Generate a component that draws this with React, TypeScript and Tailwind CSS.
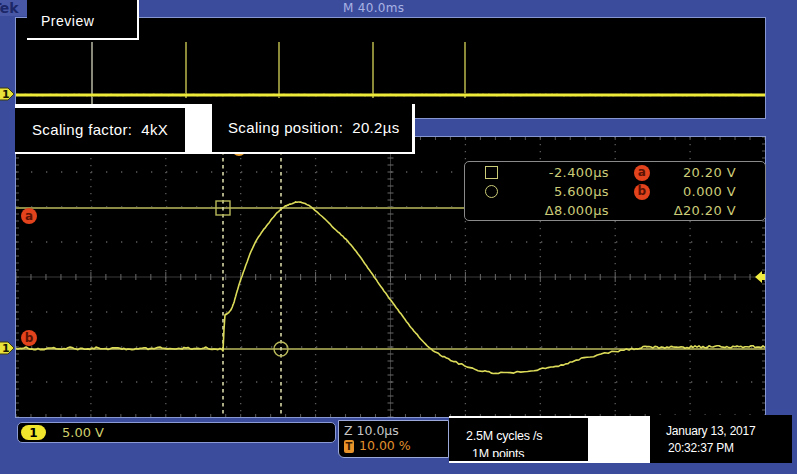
import React from "react";

function frac(x: number) {
  return x - Math.floor(x);
}
function rnd(i: number) {
  return frac(Math.sin(i * 12.9898 + 78.233) * 43758.5453) - 0.5;
}

function spline(pts: [number, number][], steps = 10) {
  const out: [number, number][] = [];
  for (let i = 0; i < pts.length - 1; i++) {
    const p0 = pts[Math.max(0, i - 1)];
    const p1 = pts[i];
    const p2 = pts[i + 1];
    const p3 = pts[Math.min(pts.length - 1, i + 2)];
    for (let s = 0; s < steps; s++) {
      const t = s / steps;
      const t2 = t * t;
      const t3 = t2 * t;
      const f = (k: 0 | 1) =>
        0.5 *
        (2 * p1[k] +
          (-p0[k] + p2[k]) * t +
          (2 * p0[k] - 5 * p1[k] + 4 * p2[k] - p3[k]) * t2 +
          (-p0[k] + 3 * p1[k] - 3 * p2[k] + p3[k]) * t3);
      out.push([f(0), f(1)]);
    }
  }
  out.push(pts[pts.length - 1]);
  return out;
}

function wavePath() {
  const pts: [number, number][] = [];
  for (let x = 0; x <= 206; x += 2) {
    const bump = Math.max(0, Math.sin(x * 0.21) * Math.sin(x * 0.07)) * 2.2;
    pts.push([x, 212 + rnd(x) * 1.6 - bump]);
  }
  pts.push([207, 214]);
  pts.push([208, 192]);
  const key: [number, number][] = [
    [209, 178],
    [213, 175],
    [217, 168],
    [225, 142],
    [238, 108],
    [252, 87],
    [265, 72],
    [275, 67],
    [283, 65],
    [295, 70],
    [318, 91],
    [335, 108],
    [352, 131],
    [368, 154],
    [385, 177],
    [398, 194],
    [415, 212],
    [435, 223],
    [462, 233],
    [485, 236],
    [518, 233],
    [545, 228],
    [568, 221],
    [602, 214],
    [625, 211],
  ];
  const sp = spline(key, 10);
  sp.forEach((p, i) => {
    const amp = p[0] > 420 ? 1.8 : 0.7;
    pts.push([p[0], p[1] + rnd(i + 500) * amp]);
  });
  for (let x = 627; x <= 751; x += 2) {
    pts.push([x, 210 + rnd(x + 1000) * 2.6]);
  }
  return pts.map((p, i) => (i === 0 ? "M" : "L") + p[0].toFixed(1) + " " + p[1].toFixed(1)).join(" ");
}

const WAVE = wavePath();

function ChannelMarker() {
  return (
    <svg width="16" height="14" viewBox="0 0 16 14">
      <path d="M-2 1 H8 L14 7 L8 13 H-2 Z" fill="#e8e23a" stroke="#3a3a10" strokeWidth="1" />
      <text x="2" y="11" fontSize="11" fontFamily="DejaVu Sans, sans-serif" fontWeight="bold" fill="#1a1a00">
        1
      </text>
    </svg>
  );
}

function Badge({ l }: { l: string }) {
  return (
    <div className="w-[16px] h-[16px] rounded-full bg-[#e2431c] flex items-center justify-center text-[12px] leading-none font-bold text-[#5a1204] pb-[1px]">
      {l}
    </div>
  );
}

function MainGraticule() {
  const W = 749;
  const H = 280;
  const vx = Array.from({ length: 9 }, (_, i) => (i + 1) * (W / 10));
  const hy = Array.from({ length: 7 }, (_, i) => (i + 1) * (H / 8));
  const ticksX = Array.from({ length: 51 }, (_, i) => i * (W / 50));
  const ticksY = Array.from({ length: 41 }, (_, i) => i * (H / 40));
  return (
    <svg width={W} height={H} viewBox={`0 0 ${W} ${H}`} className="block">
      {vx.map((x, i) =>
        i === 4 ? null : (
          <line key={"v" + i} x1={x} y1={0} x2={x} y2={H} stroke="#5c5c5c" strokeWidth="1.3" strokeDasharray="1.3 5.7" />
        )
      )}
      {hy.map((y, i) =>
        i === 3 ? null : (
          <line key={"h" + i} x1={0} y1={y} x2={W} y2={y} stroke="#5c5c5c" strokeWidth="1.3" strokeDasharray="1.3 13.7" />
        )
      )}
      <line x1={0} y1={H / 2} x2={W} y2={H / 2} stroke="#3a3a3a" strokeWidth="1" />
      <line x1={W / 2} y1={0} x2={W / 2} y2={H} stroke="#3a3a3a" strokeWidth="1" />
      {ticksX.map((x, i) => (
        <g key={"tx" + i}>
          <line x1={x} y1={H / 2 - (i % 5 === 0 ? 5 : 3)} x2={x} y2={H / 2 + (i % 5 === 0 ? 5 : 3)} stroke="#6a6a6a" strokeWidth="1" />
          <line x1={x} y1={0} x2={x} y2={3} stroke="#5a5a5a" strokeWidth="1" />
          <line x1={x} y1={H - 3} x2={x} y2={H} stroke="#5a5a5a" strokeWidth="1" />
        </g>
      ))}
      {ticksY.map((y, i) => (
        <g key={"ty" + i}>
          <line x1={W / 2 - 3} y1={y} x2={W / 2 + 3} y2={y} stroke="#6a6a6a" strokeWidth="1" />
          <line x1={0} y1={y} x2={3} y2={y} stroke="#5a5a5a" strokeWidth="1" />
          <line x1={W - 3} y1={y} x2={W} y2={y} stroke="#5a5a5a" strokeWidth="1" />
        </g>
      ))}
      {/* trigger marker */}
      <circle cx={223} cy={12} r={7} fill="#e8a030" />
      {/* cursor horizontal lines */}
      <line x1={0} y1={71} x2={W} y2={71} stroke="#8c8c46" strokeWidth="2" />
      <line x1={0} y1={212} x2={W} y2={212} stroke="#8c8c46" strokeWidth="2" />
      {/* cursor vertical dashed */}
      <line x1={207} y1={0} x2={207} y2={H} stroke="#d6d6a8" strokeWidth="1.6" strokeDasharray="3.5 3.5" />
      <line x1={265} y1={0} x2={265} y2={H} stroke="#d6d6a8" strokeWidth="1.6" strokeDasharray="3.5 3.5" />
      {/* waveform */}
      <path d={WAVE} fill="none" stroke="#dcdc5a" strokeWidth="1.6" strokeLinejoin="round" />
      {/* cursor markers */}
      <rect x={200} y={64} width={14} height={14} fill="none" stroke="#b8b85a" strokeWidth="1.4" />
      <circle cx={265} cy={212} r={7} fill="none" stroke="#b8b85a" strokeWidth="1.4" />
      {/* right reference arrow */}
      <path d="M739 140 L746 134 L746 137 L749 137 L749 143 L746 143 L746 146 Z" fill="#f0ec40" />
    </svg>
  );
}

function PreviewTrace() {
  const W = 749;
  const spikes = [170, 263, 357, 449];
  return (
    <svg width={W} height={100} viewBox={`0 0 ${W} 100`} className="block">
      <line x1={76} y1={24} x2={76} y2={87} stroke="#8a8a7a" strokeWidth="2" />
      {spikes.map((x) => (
        <line key={x} x1={x} y1={24} x2={x} y2={80} stroke="#b8b84c" strokeWidth="1.5" />
      ))}
      <line x1={0} y1={77} x2={W} y2={77} stroke="#eeea3a" strokeWidth="3" />
      {Array.from({ length: 120 }, (_, i) => (
        <rect key={i} x={i * 6.2 + (rnd(i) + 0.5) * 3} y={rnd(i + 40) > 0 ? 75 : 78} width="2" height="1" fill="#8a8620" />
      ))}
    </svg>
  );
}

export default function App() {
  const mono = { fontFamily: '"DejaVu Sans", "Liberation Sans", sans-serif' };
  const sans = { fontFamily: '"Liberation Sans", sans-serif' };
  return (
    <div className="relative w-[797px] h-[474px] overflow-hidden bg-[#3c4c9c]" style={mono}>
      {/* top bar */}
      <div className="h-[17px] flex items-start">
        <div className="w-[27px] h-[16px] bg-[#4858a6] overflow-hidden flex items-center">
          <span className="-ml-[8px] text-[14px] font-bold leading-none text-[#1c2768]">Tek</span>
        </div>
        <div className="ml-[316px] text-[12px] leading-none mt-[2px] text-[#a9b3e4] tracking-[0.3px]">M 40.0ms</div>
      </div>

      {/* preview panel */}
      <div className="ml-[15px] w-[751px] h-[102px] bg-black border border-[#8797d2] overflow-hidden">
        <PreviewTrace />
      </div>

      <div className="h-[17px]" />

      {/* main panel */}
      <div className="ml-[15px] w-[751px] h-[282px] bg-black border border-[#8797d2] overflow-hidden">
        <MainGraticule />
      </div>

      {/* bottom row */}
      <div className="flex items-start">
        <div className="ml-[17px] mt-[4px] w-[319px] h-[21px] bg-black border border-[#8a9ad4] rounded-[5px] flex items-center">
          <div className="ml-[3px] w-[25px] h-[15px] rounded-full bg-[#f2e62c] flex items-center justify-center text-[12px] leading-none font-bold text-black">
            1
          </div>
          <div className="ml-[16px] text-[13px] leading-none text-[#cfcf6e]">5.00 V</div>
        </div>
        <div className="ml-[2px] mt-[2px] w-[111px] h-[38px] bg-black border border-[#9aa8da] rounded-bl-[6px] flex flex-col pl-[5px] pt-[2px]">
          <div className="text-[12.5px] leading-[16px] text-[#c6c6c6]">Z 10.0µs</div>
          <div className="flex items-center gap-[5px] mt-[1px]">
            <div className="w-[10px] h-[13px] bg-[#e8922a] rounded-[2px] flex items-center justify-center text-[10px] font-bold leading-none text-[#3a1a00]">
              T
            </div>
            <div className="text-[12.5px] leading-none text-[#e0902c]">10.00 %</div>
          </div>
        </div>
        <div className="-mt-[2px] w-[343px] h-[47px] bg-white flex items-start">
          <div className="mt-[2px] w-[139px] h-[43px] bg-black overflow-hidden">
            <div className="h-[39px] overflow-hidden text-white text-[12.5px] tracking-[-0.2px] whitespace-nowrap" style={sans}>
              <div className="ml-[17px] mt-[11px] leading-[14px]">2.5M cycles /s</div>
              <div className="ml-[23px] mt-[4px] leading-[14px]">1M points</div>
            </div>
          </div>
          <div className="w-[62px]" />
          <div className="-mt-[1px] w-[142px] h-[48px] bg-black text-white text-[12px] tracking-[-0.2px] whitespace-nowrap" style={sans}>
            <div className="ml-[16px] mt-[10px] leading-[13px]">January 13, 2017</div>
            <div className="ml-[18px] mt-[4px] leading-[13px]">20:32:37 PM</div>
          </div>
        </div>
      </div>

      {/* overlays */}
      <div className="absolute left-[27px] top-0 w-[112px] h-[40px] bg-black border-r-2 border-b-2 border-white">
        <div className="ml-[14px] mt-[14px] text-[14px] leading-none text-white tracking-[0.5px]" style={sans}>
          Preview
        </div>
      </div>

      <div className="absolute left-[15px] top-[104px] w-[400px] h-[50px] bg-white flex items-start">
        <div className="mt-[4px] w-[170px] h-[44px] bg-black flex items-center pl-[17px] text-[15px] text-white tracking-[0.35px] whitespace-nowrap" style={sans}>
          Scaling factor:&nbsp; 4kX
        </div>
        <div className="ml-[27px] w-[200px] h-[48px] bg-black flex items-center pl-[16px] text-[15px] text-white tracking-[0.35px] whitespace-nowrap" style={sans}>
          Scaling position:&nbsp; 20.2µs
        </div>
      </div>

      {/* readout */}
      <div className="absolute left-[464px] top-[161px] w-[302px] h-[60px] bg-black border border-[#8a8a8a] rounded-[5px] text-[13px] leading-none text-[#cccc78] tracking-[0.4px] whitespace-nowrap">
        <div className="grid grid-cols-[40px_104px_66px_61px] grid-rows-[19px_19px_19px] pt-[1px]">
          <div className="flex items-center justify-center pl-[12px]">
            <div className="w-[13px] h-[13px] border-[1.5px] border-[#cccc78]" />
          </div>
          <div className="flex items-center justify-end">-2.400µs</div>
          <div className="flex items-center justify-center"><Badge l="a" /></div>
          <div className="flex items-center justify-end">20.20 V</div>

          <div className="flex items-center justify-center pl-[12px]">
            <div className="w-[13px] h-[13px] rounded-full border-[1.5px] border-[#cccc78]" />
          </div>
          <div className="flex items-center justify-end">5.600µs</div>
          <div className="flex items-center justify-center"><Badge l="b" /></div>
          <div className="flex items-center justify-end">0.000 V</div>

          <div />
          <div className="flex items-center justify-end">Δ8.000µs</div>
          <div />
          <div className="flex items-center justify-end">Δ20.20 V</div>
        </div>
      </div>

      {/* a / b badges on graticule */}
      <div className="absolute left-[21px] top-[208px]"><Badge l="a" /></div>
      <div className="absolute left-[21px] top-[330px]"><Badge l="b" /></div>

      {/* channel 1 markers */}
      <div className="absolute left-0 top-[87px]"><ChannelMarker /></div>
      <div className="absolute left-0 top-[341px]"><ChannelMarker /></div>
    </div>
  );
}
